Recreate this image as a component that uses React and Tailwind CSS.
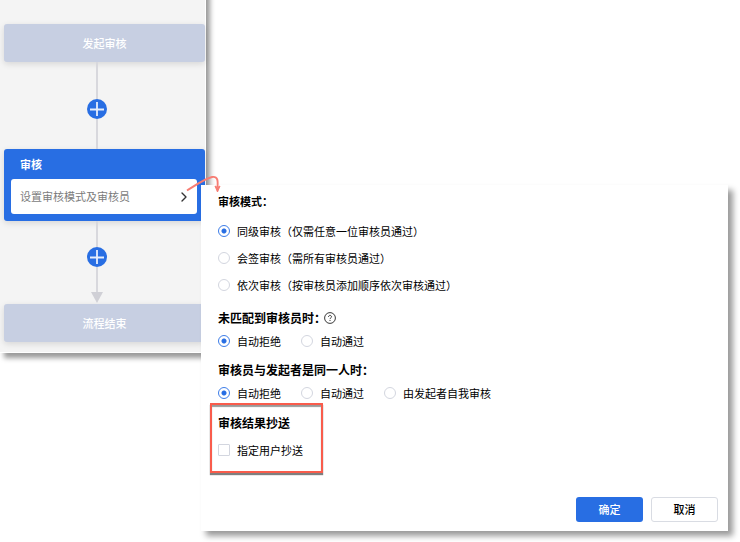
import { useState } from 'react'
import { ChevronRight } from 'lucide-react'

const modes = [
  { value: 'any', label: '同级审核（仅需任意一位审核员通过）' },
  { value: 'all', label: '会签审核（需所有审核员通过）' },
  { value: 'order', label: '依次审核（按审核员添加顺序依次审核通过）' }
]

const unmatchedOptions = [
  { value: 'reject', label: '自动拒绝' },
  { value: 'pass', label: '自动通过' }
]

const samePersonOptions = [
  ...unmatchedOptions,
  { value: 'self', label: '由发起者自我审核' }
]

const AddButton = () => (
  <button type="button" aria-label="添加节点" className="block size-5 shrink-0 rounded-full bg-[#286ee3]">
    <svg viewBox="0 0 20 20" className="size-5" stroke="#e6eefc" strokeWidth="1.8">
      <path d="M10 3v14M3 10.500h14" />
    </svg>
  </button>
)

const EndNode = ({ children }) => (
  <div className="flex h-[38px] items-center justify-center rounded-[3px] bg-[#c7cfe2] text-[11px] font-medium text-white shadow-[0_2px_6px_rgba(0,0,0,0.12)]">
    {children}
  </div>
)

const Radio = ({ name, option, value, onChange }) => (
  <label className="flex h-[18px] items-center gap-[7px] text-[11px]">
    <input
      type="radio"
      name={name}
      checked={value === option.value}
      onChange={() => onChange(option.value)}
      className="size-3 shrink-0 appearance-none rounded-full border border-[#d3d6df] bg-white checked:border-[#3d7de8] checked:bg-[radial-gradient(circle,#286ee3_2px,#fff_3px)]"
    />
    {option.label}
  </label>
)

const Flow = () => (
  <aside className="-mt-4 w-[206px] shrink-0 border-r border-b border-white bg-[#f4f4f4] pt-10 pb-[10px] pl-1 shadow-[4px_5px_5px_rgba(0,0,0,0.4)]">
    <EndNode>发起审核</EndNode>
    <div className="ml-[83px] flex w-5 flex-col items-center">
      <div className="h-[37px] w-0.5 bg-[#d8d8dd]" />
      <AddButton />
      <div className="h-[30px] w-0.5 bg-[#d8d8dd]" />
    </div>
    <div className="rounded-[3px] bg-[#286ee3] pr-2 pb-[7px] pl-[7px] shadow-[0_2px_6px_rgba(0,0,0,0.12)]">
      <h2 className="pl-[9px] text-[11px] leading-[30px] font-bold text-white">审核</h2>
      <button type="button" className="flex h-[35px] w-full items-center justify-between rounded-[3px] bg-white pr-[5px] pl-[9px] text-[11px] text-[#7c7c7c]">
        设置审核模式及审核员
        <ChevronRight className="size-4 text-[#333]" strokeWidth={2} />
      </button>
    </div>
    <div className="ml-[83px] flex w-5 flex-col items-center">
      <div className="h-[26px] w-0.5 bg-[#d8d8dd]" />
      <AddButton />
      <div className="h-[25px] w-0.5 bg-[#d8d8dd]" />
      <svg viewBox="0 0 12 12" className="size-3" fill="#d0d0d6">
        <path d="M0 0h12L6 11z" />
      </svg>
    </div>
    <EndNode>流程结束</EndNode>
  </aside>
)

const App = () => {
  const [mode, setMode] = useState('any')
  const [unmatched, setUnmatched] = useState('reject')
  const [samePerson, setSamePerson] = useState('reject')
  const [copyUsers, setCopyUsers] = useState(false)

  return (
    <div className="flex min-h-screen items-start overflow-hidden bg-white font-['Noto_Sans_CJK_SC',sans-serif] text-black">
      <Flow />

      <form
        onSubmit={e => e.preventDefault()}
        className="relative mt-[185px] mr-3 -ml-[5px] flex-1 bg-white pt-[7px] pr-[10px] pb-[9px] pl-[17px] shadow-[5px_5px_6px_rgba(0,0,0,0.4)]"
      >
        {/* Arrow from the node to its settings */}
        <svg viewBox="0 0 36 20" className="absolute -top-3 -left-4 h-5 w-9" fill="none" stroke="#f77d74" strokeWidth="1.9">
          <path d="M2 17.500C10 12.500 20 5.500 27 4C33 3 33 8 32.500 14" />
          <path d="M30 13l2.500 1.500L35 13l-2.500 6z" fill="#f77d74" strokeWidth="1" />
        </svg>

        <fieldset>
          <legend className="text-[11px] leading-[18px] font-bold">审核模式：</legend>
          <div className="mt-3 flex flex-col gap-[9px]">
            {modes.map(option => (
              <Radio key={option.value} name="mode" option={option} value={mode} onChange={setMode} />
            ))}
          </div>
        </fieldset>

        <fieldset className="mt-[15px]">
          <legend className="flex items-center text-[12px] leading-[18px] font-bold">
            未匹配到审核员时：
            <svg viewBox="0 0 12 12" className="-ml-0.5 size-3" fill="none" stroke="#222" strokeWidth="0.9">
              <circle cx="6" cy="6" r="5.400" />
              <path d="M4.500 4.900C4.500 2.900 7.500 2.900 7.500 4.800C7.500 5.900 6 5.900 6 7.100M6 8v1" />
            </svg>
          </legend>
          <div className="mt-[5px] flex gap-5">
            {unmatchedOptions.map(option => (
              <Radio key={option.value} name="unmatched" option={option} value={unmatched} onChange={setUnmatched} />
            ))}
          </div>
        </fieldset>

        <fieldset className="mt-[11px]">
          <legend className="text-[12px] leading-[18px] font-bold">审核员与发起者是同一人时：</legend>
          <div className="mt-[5px] flex gap-5">
            {samePersonOptions.map(option => (
              <Radio key={option.value} name="samePerson" option={option} value={samePerson} onChange={setSamePerson} />
            ))}
          </div>
        </fieldset>

        {/* Copy recipients */}
        <section className="mt-px -ml-2 w-[113px] border-2 border-[#f95c4c] px-[6px] pt-[9px] pb-3 shadow-[0_2px_1px_rgba(0,0,0,0.5),inset_0_2px_1px_rgba(0,0,0,0.4)]">
          <h3 className="text-[12px] leading-[18px] font-bold">审核结果抄送</h3>
          <label className="mt-[9px] flex h-[18px] items-center gap-[7px] text-[11px]">
            <input
              type="checkbox"
              checked={copyUsers}
              onChange={e => setCopyUsers(e.target.checked)}
              className="size-3 shrink-0 appearance-none rounded-[1px] border border-[#d3d6df] bg-white checked:border-[#286ee3] checked:bg-[#286ee3]"
            />
            指定用户抄送
          </label>
        </section>

        <div className="mt-6 flex justify-end gap-2">
          <button type="submit" className="h-[25px] w-[67px] rounded-[3px] bg-[#286ee3] text-[11px] font-medium text-white">
            确定
          </button>
          <button type="button" className="h-[25px] w-[67px] rounded-[3px] border border-[#d9dce3] bg-white text-[11px] font-medium">
            取消
          </button>
        </div>
      </form>
    </div>
  )
}

export default App
